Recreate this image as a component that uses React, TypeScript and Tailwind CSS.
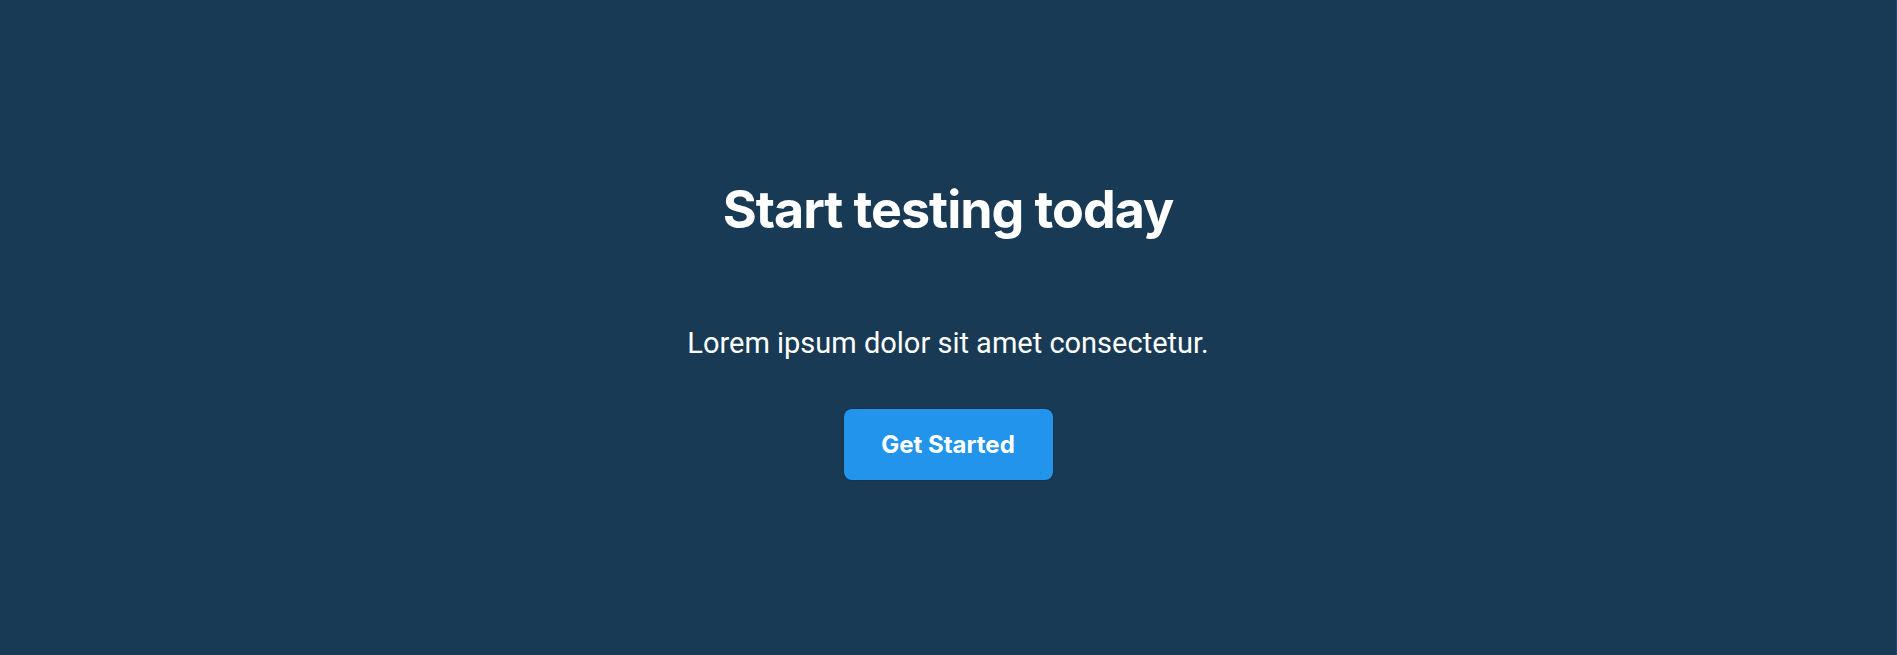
import React from 'react';

export default function App() {
  return (
    <section className="w-full h-[655px] bg-[#183a54] border-r border-[#22496a] flex flex-col items-center">
      <h1 className="mt-[178px] text-white text-[52px] leading-[64px] font-bold tracking-[-0.02em] [font-family:Inter,'Noto_Sans',sans-serif]">
        Start testing today
      </h1>
      <p className="mt-[83px] text-white text-[29px] leading-[36px] [font-family:Roboto,'Liberation_Sans',sans-serif]">
        Lorem ipsum dolor sit amet consectetur.
      </p>
      <button className="mt-[48px] w-[209px] h-[71px] rounded-lg bg-[#2394ec] text-white text-[24px] font-bold [font-family:Inter,'Noto_Sans',sans-serif] shadow-[0_0_2px_rgba(0,0,0,0.3)]">
        Get Started
      </button>
    </section>
  );
}
